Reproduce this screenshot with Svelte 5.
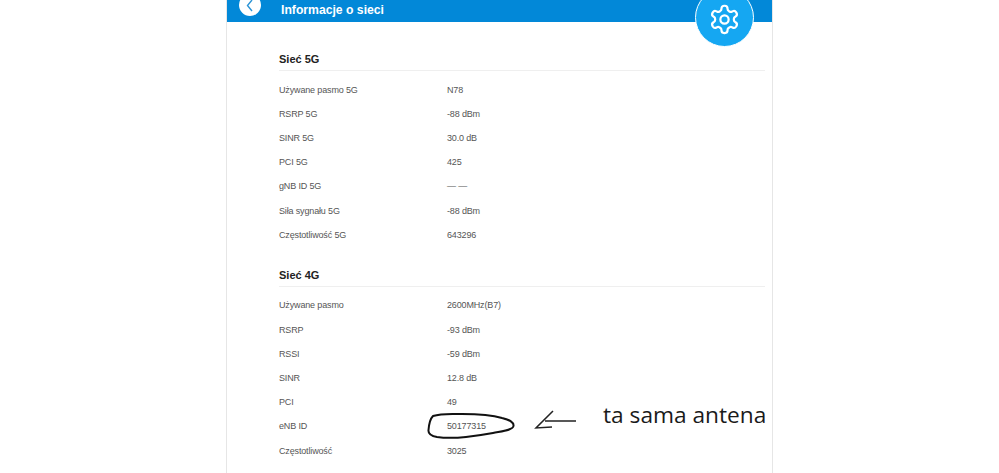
<script lang="ts">
    const sections = [
        {
            title: 'Sieć 5G',
            rows: [
                ['Używane pasmo 5G', 'N78'],
                ['RSRP 5G', '-88 dBm'],
                ['SINR 5G', '30.0 dB'],
                ['PCI 5G', '425'],
                ['gNB ID 5G', '— —'],
                ['Siła sygnału 5G', '-88 dBm'],
                ['Częstotliwość 5G', '643296']
            ]
        },
        {
            title: 'Sieć 4G',
            rows: [
                ['Używane pasmo', '2600MHz(B7)'],
                ['RSRP', '-93 dBm'],
                ['RSSI', '-59 dBm'],
                ['SINR', '12.8 dB'],
                ['PCI', '49'],
                ['eNB ID', '50177315'],
                ['Częstotliwość', '3025']
            ]
        }
    ];
</script>

<div class="page">
    <main class="panel">
        <header class="panel__header">
            <span class="back">
                <svg width="22" height="22" viewBox="0 0 22 22" aria-hidden="true">
                    <path d="M13 6 L8.5 11.5 L13 17" fill="none" stroke="#2b94d6" stroke-width="1.4" />
                </svg>
            </span>
            <h1>Informacje o sieci</h1>
        </header>

        <div class="gear">
            <svg width="33" height="33" viewBox="0 0 24 24" aria-hidden="true">
                <circle cx="12" cy="12" r="3" fill="none" stroke="#fff" stroke-width="1.6" />
                <path
                    d="M12.2 2h-.4a2 2 0 0 0-2 2v.2a2 2 0 0 1-1 1.7l-.4.3a2 2 0 0 1-2 0l-.2-.1a2 2 0 0 0-2.7.7l-.2.4a2 2 0 0 0 .7 2.7l.2.1a2 2 0 0 1 1 1.7v.5a2 2 0 0 1-1 1.7l-.2.1a2 2 0 0 0-.7 2.7l.2.4a2 2 0 0 0 2.7.7l.2-.1a2 2 0 0 1 2 0l.4.3a2 2 0 0 1 1 1.7v.2a2 2 0 0 0 2 2h.4a2 2 0 0 0 2-2v-.2a2 2 0 0 1 1-1.7l.4-.3a2 2 0 0 1 2 0l.2.1a2 2 0 0 0 2.7-.7l.2-.4a2 2 0 0 0-.7-2.7l-.2-.1a2 2 0 0 1-1-1.7v-.5a2 2 0 0 1 1-1.7l.2-.1a2 2 0 0 0 .7-2.7l-.2-.4a2 2 0 0 0-2.7-.7l-.2.1a2 2 0 0 1-2 0l-.4-.3a2 2 0 0 1-1-1.7V4a2 2 0 0 0-2-2z"
                    fill="none"
                    stroke="#fff"
                    stroke-width="1.6"
                    stroke-linejoin="round"
                />
            </svg>
        </div>

        <div class="content">
            {#each sections as section}
                <section class="section">
                    <h2>{section.title}</h2>
                    <dl>
                        {#each section.rows as [label, value]}
                            <div class="row">
                                <dt>{label}</dt>
                                <dd>{value}</dd>
                            </div>
                        {/each}
                    </dl>
                </section>
            {/each}
        </div>
    </main>

    <!-- odręczna adnotacja na zrzucie -->
    <svg class="scribble" width="999" height="473" viewBox="0 0 999 473" aria-hidden="true">
        <path
            d="M433 416 C442 413 452 414 462 414 C478 414 492 415 502 418 C510 420 514 422 513.500 426 C513 430 503 431 493 433 C482 435 475 436 466 437 C456 438 444 438 437 437 C431 436 428 434 428.500 430 C429 424 430 419 433 416 Z"
            fill="none"
            stroke="#111"
            stroke-width="2"
        />
        <path d="M576 421 L545 421 M553 411 L536 428 L552 427" fill="none" stroke="#222" stroke-width="1.5" />
    </svg>
    <span class="note">ta sama antena</span>
</div>

<style>
    :global(body) {
        background: #fff;
    }

    .page {
        position: relative;
        width: 999px;
        height: 473px;
        overflow: hidden;
        background: #fff;
        font-family: "Liberation Sans", Arial, sans-serif;
    }

    .panel {
        position: relative;
        box-sizing: border-box;
        width: 547px;
        height: 473px;
        margin-left: 226px;
        border-left: 1px solid #e6e6e6;
        border-right: 1px solid #e6e6e6;
    }

    .panel__header {
        display: flex;
        align-items: flex-start;
        gap: 20px;
        height: 22px;
        padding-left: 12px;
        background: #0288d8;
    }

    .back {
        display: block;
        flex: none;
        width: 22px;
        height: 22px;
        margin-top: -6px;
        border-radius: 50%;
        background: #fff;
    }

    .back svg {
        display: block;
    }

    h1 {
        margin: 0;
        color: #fff;
        font-size: 12.2px;
        font-weight: 700;
        line-height: 20px;
    }

    .gear {
        position: absolute;
        top: -12px;
        left: 468px;
        display: grid;
        place-items: center;
        box-sizing: border-box;
        width: 59px;
        height: 59px;
        padding-top: 4px;
        border: 1.5px solid #fff;
        border-radius: 50%;
        background: #15a7f2;
    }

    .content {
        padding: 30px 7px 0 52px;
    }

    .section + .section {
        margin-top: 21px;
    }

    h2 {
        margin: 0;
        padding-bottom: 3px;
        border-bottom: 1px solid #efefef;
        color: #222;
        font-size: 11px;
        font-weight: 700;
        line-height: 15px;
    }

    dl {
        margin: 6.5px 0 0;
    }

    .row {
        display: flex;
        align-items: center;
        height: 24.2px;
        color: #555;
        font-size: 9px;
        letter-spacing: -0.15px;
    }

    dt {
        width: 168px;
    }

    dd {
        margin: 0;
    }

    .scribble {
        position: absolute;
        inset: 0;
    }

    .note {
        position: absolute;
        top: 399px;
        left: 603px;
        color: #1a1a1a;
        font-family: "Open Sans", sans-serif;
        font-size: 22.7px;
        line-height: 32px;
        white-space: nowrap;
    }
</style>
